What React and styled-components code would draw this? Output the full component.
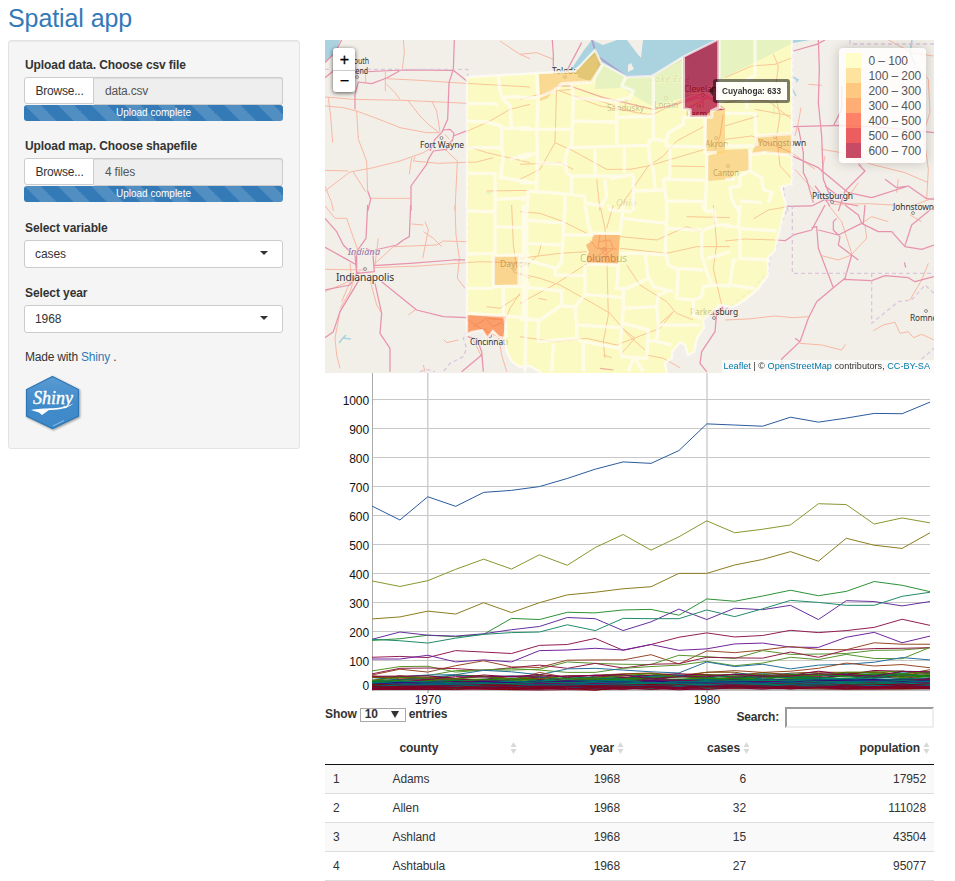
import React from "react";
import styled, { createGlobalStyle } from "styled-components";

const GlobalStyle = createGlobalStyle`
  * { box-sizing: border-box; }
  body { margin: 0; background: #fff; color: #333; font: 12px/17px "Liberation Sans", Arial, sans-serif; letter-spacing: -0.09px; overflow: hidden; }
`;

const Page = styled.div`
  width: 955px;
  height: 881px;
  padding-left: 8px;
  overflow: hidden;
`;
const Title = styled.h2`
  margin: 0;
  height: 40px;
  padding-top: 4px;
  font-size: 25px;
  line-height: 28px;
  font-weight: 400;
  color: #337ab7;
`;
const Columns = styled.div`
  display: grid;
  grid-template-columns: 292px 609px;
  column-gap: 25px;
  align-items: start;
`;
const Sidebar = styled.aside`
  height: 409px;
  padding: 15px 16px;
  background: #f5f5f5;
  border: 1px solid #e3e3e3;
  border-radius: 3px;
  box-shadow: inset 0 1px 1px rgba(0, 0, 0, 0.05);
`;
const Field = styled.div`
  height: ${(p) => p.$h}px;
  padding-top: ${(p) => p.$top || 0}px;
`;
const Label = styled.label`
  display: block;
  height: 21px;
  line-height: 18px;
  font-weight: 700;
`;
const FileRow = styled.div`
  display: flex;
  height: 28px;
  width: 259px;
  margin-left: -1px;
`;
const Browse = styled.button`
  width: 70px;
  height: 27px;
  padding: 0 0 0 1px;
  font: 12px "Liberation Sans", Arial, sans-serif;
  letter-spacing: -0.2px;
  color: #333;
  background: #fff;
  border: 1px solid #ccc;
  border-radius: 3px 0 0 3px;
`;
const FileName = styled.div`
  flex: 1;
  padding-left: 11px;
  line-height: 26px;
  letter-spacing: -0.2px;
  color: #555;
  background: #eee;
  border: 1px solid #ccc;
  border-left-width: 0;
  border-radius: 0 3px 3px 0;
  box-shadow: inset 0 1px 1px rgba(0, 0, 0, 0.075);
`;
const Progress = styled.div`
  width: 259px;
  height: 16px;
  margin-left: -1px;
  border-radius: 3px;
  color: #fff;
  font-size: 10px;
  letter-spacing: 0;
  line-height: 16px;
  text-align: center;
  background: #337ab7 linear-gradient(45deg, rgba(255,255,255,.15) 25%, transparent 25%, transparent 50%, rgba(255,255,255,.15) 50%, rgba(255,255,255,.15) 75%, transparent 75%) 0 0 / 33.3px 33.3px;
`;
const Select = styled.div`
  display: flex;
  align-items: center;
  justify-content: space-between;
  width: 259px;
  height: 28px;
  margin-left: -1px;
  padding: 0 14px 0 10px;
  background: #fff;
  border: 1px solid #ccc;
  border-radius: 3px;
  &::after {
    content: "";
    border: 4px solid transparent;
    border-top-color: #333;
    border-bottom: 0;
    margin-top: -3px;
  }
`;
const Made = styled.p`
  margin: 0;
  height: 25px;
  line-height: 19px;
  letter-spacing: -0.2px;
`;
const Link = styled.a`
  color: ${(p) => p.$c || "#337ab7"};
`;
const Logo = styled.svg`
  display: block;
  width: 60px;
  height: 60px;
  letter-spacing: 0;
`;
const Main = styled.main`
  display: flex;
  flex-direction: column;
`;
const MapBox = styled.div`
  position: relative;
  height: 333px;
  background: #f2efe9;
  overflow: hidden;
`;
const Canvas = styled.svg`
  display: block;
  width: 609px;
  height: ${(p) => p.$h}px;
`;
const Zoom = styled.div`
  position: absolute;
  left: 8px;
  top: 8px;
  width: 22px;
  border-radius: 3px;
  background: #fff;
  box-shadow: 0 1px 4px rgba(0, 0, 0, 0.65);
`;
const ZoomButton = styled.div`
  height: 22px;
  padding-left: 1px;
  text-align: center;
  font: 400 16px/23px "Liberation Sans", sans-serif;
  -webkit-text-stroke: 0.3px #000;
  color: #000;
  & + & { border-top: 1px solid #ccc; line-height: 19px; }
`;
const Legend = styled.div`
  position: absolute;
  right: 8px;
  top: 8px;
  width: 87px;
  height: 115px;
  padding: 5px 7px;
  border-radius: 4px;
  background: rgba(255, 255, 255, 0.8);
  box-shadow: 0 0 12px rgba(0, 0, 0, 0.2);
`;
const LegendRow = styled.div`
  display: flex;
  height: 15px;
  line-height: 16px;
  color: #555;
  white-space: nowrap;
  &::before {
    content: "";
    flex: none;
    width: 15px;
    margin-right: 7.5px;
    opacity: 0.7;
    background: ${(p) => p.$c};
  }
`;
const Tooltip = styled.div`
  position: absolute;
  left: 388px;
  top: 39px;
  width: 77px;
  height: 24px;
  border: 3px solid rgba(0, 0, 0, 0.5);
  border-radius: 3px;
  background: rgba(255, 255, 255, 0.88);
  background-clip: padding-box;
  color: #333;
  font: 700 8.3px/18px "Liberation Sans", sans-serif;
  letter-spacing: 0;
  text-align: center;
  white-space: nowrap;
  &::before {
    content: "";
    position: absolute;
    left: -7px;
    top: 4px;
    border: 5px solid transparent;
    border-right: 4px solid rgba(0, 0, 0, 0.6);
    border-left: 0;
  }
`;
const Attribution = styled.div`
  position: absolute;
  right: 0;
  bottom: 0;
  width: 212px;
  height: 13px;
  padding-right: 4px;
  text-align: right;
  font-size: 9.15px;
  letter-spacing: 0;
  line-height: 13px;
  white-space: nowrap;
  background: rgba(255, 255, 255, 0.7);
`;
const Controls = styled.div`
  display: flex;
  justify-content: space-between;
  height: 25px;
  font-weight: 700;
`;
const Length = styled.div`
  display: flex;
  align-items: center;
  height: 17px;
  gap: 3px;
`;
const LengthSelect = styled.span`
  display: flex;
  justify-content: space-between;
  align-items: center;
  width: 46px;
  height: 14px;
  padding: 0 6px 0 4px;
  border: 1px solid #a9a9a9;
  background: #fff;
  &::after {
    content: "";
    border: 4px solid transparent;
    border-top: 7px solid #333;
    border-bottom: 0;
  }
`;
const Search = styled.div`
  display: flex;
  align-items: center;
  height: 21px;
  margin-top: 1px;
  gap: 6px;
  letter-spacing: -0.2px;
`;
const SearchBox = styled.input`
  width: 149px;
  height: 21px;
  border: 2px solid;
  border-color: #9a9a9a #eee #eee #9a9a9a;
  background: #fff;
  outline: 0;
`;
const Row = styled.div`
  display: grid;
  grid-template-columns: 67.5px 128.5px 99px 126px 180px;
  padding-right: 8px;
  height: 29px;
  line-height: 28px;
  background: ${(p) => (p.$odd ? "#f9f9f9" : "#fff")};
  border-bottom: 1px solid #ddd;
`;
const HeadRow = styled(Row)`
  height: 34px;
  line-height: 34px;
  font-weight: 700;
  border-bottom-color: #111;
`;
const Cell = styled.span`
  text-align: ${(p) => (p.$left ? "left" : "right")};
  padding-left: ${(p) => p.$pad || 0}px;
`;
const HeadCell = styled.span`
  display: flex;
  align-items: center;
  justify-content: ${(p) => (p.$spread ? "space-between" : "flex-end")};
  gap: 3px;
  margin-right: ${(p) => (p.$spread ? 4 : -4)}px;
  padding-left: ${(p) => (p.$spread ? 7 : 0)}px;
`;
const SortIcon = styled.svg`
  width: 7px;
  height: 12px;
  fill: #d9d9d9;
`;

const TILES = { A: [320, 36], B: [520, 36], C: [725, 36], D: [320, 205], E: [520, 205], F: [725, 205] };

const minor = {
  A: "M250 12L253 50L247 98M137 105V140M540 15L600 55L630 68M15 183L100 190L250 193L443 202M15 210L70 215L110 225L190 255L240 275L320 290L360 290M196 108V165M265 195L300 240L325 265L355 288M335 195L350 225L360 288M200 128L300 133L400 140L630 153M200 145L225 170L240 190M25 185L32 240L38 320M15 465L90 408L160 395L240 375L310 350L330 338M110 225L115 310L140 375L143 465M98 405L137 467M275 365L268 415M15 403L85 405M285 362L280 375L355 382L470 378L520 365M375 340L412 375L405 525M375 295L388 310M150 487H270M15 450L35 500L40 525M443 285L510 255L570 220L630 205M440 330L500 350L630 380M500 465L630 463",
  B: "M0 55L50 50L100 70M0 190L100 165L160 160M110 150L105 320L60 400L0 430M105 320L160 345L260 400L330 400L385 390L555 340M230 430L240 525M385 390L330 470L290 525M120 165L240 210L380 235L400 235L490 190M160 180L240 195L350 230M490 210L540 195L570 190M490 175L545 170M555 270L470 315L430 360L385 390M610 235L600 300L585 340M0 385L120 380L160 400M450 390L555 392M535 200L540 243",
  C: "M0 125L80 90L150 85L202 65M0 200L50 190L130 195L200 250M90 220L200 240M145 55L160 90L150 170L165 240L155 300L165 390L202 430M228 215L220 260L210 300M0 310L80 300L200 350L270 400M250 145L290 148M355 335L410 390M490 12L560 50L625 60M575 90L610 130L615 230L595 290L610 400L605 490M290 340L350 350L440 385L540 410L610 440M520 430L515 470M325 505L430 503L560 510L627 485M210 400L290 490M0 270L100 240M400 440L365 490M480 70L540 85M300 360L290 410",
  D: "M15 2L45 40L80 40L115 140M15 193L130 195M15 260L85 230L120 200M160 180L220 125L350 120L370 108L443 110M160 188L300 183L480 170L630 175M120 220L60 320L45 400L50 450L60 490M90 175L95 220L65 290M110 200L90 260L60 310M150 225L170 300L185 325M405 0L408 90L418 160L412 220L435 250M315 50L325 75L308 160M275 57L310 60M310 80L340 100L365 125M370 403L380 413L415 405M575 0L580 120L590 190M500 380L535 395L545 450L560 500M310 480L315 500M175 100L165 180M265 330L285 315M460 405L485 455M580 200L630 220M500 305L540 310L600 270M600 265L570 310L550 360M445 345L480 370L500 375M460 365L500 340L550 345M500 345L520 365L550 350",
  E: "M0 20L60 25L130 50L200 85M240 0L255 70L260 140L265 330L250 410L255 460M260 70L280 0M210 105L230 130L290 132M240 90L235 125L255 150L280 130L270 105L235 110M300 95L410 105L500 65L545 80M0 160L120 145L200 140M0 205L60 220L120 240L210 290L270 325L330 395L375 435M110 235L195 180L260 135M110 235L0 295M0 395L100 410L200 400L290 420L420 370L460 320M320 180L360 240L440 290L470 325L520 345M460 320L410 365M630 125L530 125L440 145L300 130M500 35L630 38M580 0L590 120L580 190L605 300M0 155L20 180L55 150L65 115M380 450L430 460L480 488M55 280L80 285M250 450L275 458M300 365L345 400L300 450",
  F: "M0 108L60 102L150 105M85 42L130 15L190 5M0 345L70 342L150 333L205 338L250 335M225 415L290 420L350 435L362 418M445 377L475 360L510 352L525 385L550 380L565 398L590 388L627 405M310 0L350 50L380 145M420 60L425 100L380 148M410 55L440 35L490 50M290 152L340 165L380 150M610 175L590 225L555 285M555 30L590 50",
};
const major = {
  A: "M15 80L45 50L65 12M15 125L40 105L80 110L250 102L400 103L443 137M115 138L155 143L200 126L238 105M403 12L400 100L387 140L383 250L365 290M115 138L105 175L105 220M365 290L370 282L390 280L402 292L398 312L390 320L380 340L340 345L325 370L320 385L273 450V525M365 290L345 310L330 345M400 300L443 283M143 465L152 490L143 525",
  B: "M97 12L100 55L100 100M185 20L140 105M110 150L150 150L250 185L400 220L470 205L540 175L560 180L615 220M490 200L530 185L560 188L600 185M500 220L560 185M545 170L550 215",
  C: "M205 45L275 25L300 12M280 12L283 100L280 200L290 300L295 430L325 505M205 272L350 268L480 275L627 290M325 270L350 220L350 150M220 275L235 350L235 410L245 430L265 500M190 355L280 395L370 470L440 485L550 450L605 488L627 490M400 385L420 405L360 465L340 525M480 430L515 455L550 450M185 511L260 510L300 490L400 510M270 450L315 510M300 450L340 480",
  D: "M143 0L138 100L110 140V190M138 130L158 140L163 200L110 205L105 150M15 40L50 80L70 120L100 150M15 127L75 160L110 180M272 0L268 95L250 105L230 120L165 135M160 182L270 175L400 165L435 165M185 230L290 315L370 335L443 338M15 255L90 240L115 200M165 235L185 325L180 385L210 430L210 500M120 220L60 320L40 380L15 398M470 400L485 440L490 500M485 450L425 500M443 395L470 403",
  E: "M610 303L590 325L585 380L545 440L540 475L560 500M580 330L610 310M240 490L280 495",
  F: "M155 105L180 107L210 88L260 75L300 0M260 68L275 65L280 130L325 248L360 220L380 150L340 120L345 95L325 75L325 50L335 40M280 75L340 90L410 55L400 30L360 0M410 55L460 80L500 80L540 125L590 133L627 120M540 122L560 60L627 5M420 0L415 55M325 248L275 290L250 340L225 410L170 462V500M355 223L440 227L480 212L550 218L570 230L627 215M538 172L542 188M380 150L400 165M210 400L225 410",
};
const borders = {
  A: "M443 203H518L535 208M535 120L540 165L548 190L570 208L575 278M550 185L580 182L630 185M443 255L500 258L545 270L545 335L550 370L540 430M545 278L630 275M443 335H540M570 370L630 352M443 412H525V525M543 385L545 425L630 438M525 490L625 485V460",
  B: "M50 115L55 190L50 280L52 350L50 465M0 185H50L100 165L125 143L215 138L250 82M155 145L160 190L155 330M160 185L285 195L330 185L340 165L305 150L318 122M290 195V325M155 255L290 258M290 245L400 240M400 122V310L440 315L445 290L490 265V245L510 243M0 280H155M145 335L385 328L390 312L400 310M145 335L135 370L140 410L155 420L315 420L340 415M0 370L50 350M50 380L135 385M225 340V415M313 335V410M385 328L390 375L400 400L405 460M440 315V330L555 333M450 335V425L430 430L440 500V525M430 430L560 433M555 240V350H590M560 350V430L555 525M340 420V525M255 430L260 480L245 510L195 500V480M155 420V475M25 465L150 475L195 480M25 465L20 525M0 440H50M135 480V525M0 490L25 487M270 428L315 420M340 465L440 462M440 495L560 497M490 62V218L510 222V243H575V225L597 215V12",
  C: "M90 12V120L65 130V220M0 232H90L95 330M95 300L200 293M0 330H90M75 355L120 350L200 358M75 340V405L45 420L45 450L15 455L20 490L40 525M75 405L110 425L115 460L140 470L130 500M0 430H30M45 495L110 500",
  D: "M443 18L520 20M525 0V145L443 147M525 65L610 68M520 152V245L597 243L630 240M597 243V152L630 150M525 152L597 150M443 250H520M550 250V330M610 0V340M443 325L560 333L630 340M555 333L560 400",
  E: "M20 0V245L15 500M20 45L135 55M20 115L130 120M0 160L110 190L125 170L135 0M135 90H218L205 60L195 0M105 190V210L195 212M0 245L125 258V300L60 345L0 342M55 345V410L170 400L170 360L165 305L195 268L310 278M125 303L165 305M195 180V268M300 88L310 0M218 85L300 85M200 177L295 180L290 250L320 250L355 235L385 220L375 145H300M310 40L440 55L435 150M375 145L440 150L445 180L475 195L470 280L520 285L520 330L545 340M390 220L400 245L460 260M545 75L440 70M440 0V70M545 75V150L560 200L575 240L550 245L545 275L520 285M475 190L550 195M545 0L560 20L580 15L590 60L550 75M310 250V310L410 305L415 270L440 260M310 310L300 425L305 455L380 460L385 375L310 355M170 360L300 368M410 305L415 360L540 360M415 360L410 410L455 420M385 408H410M170 400L190 410L300 430M190 410V500M100 415L95 500M340 460L325 500M345 460L370 500M590 60H630M560 160L600 150L630 140M575 240L630 243M265 0L270 15L335 20",
  F: "M45 0L40 70L155 78M35 165L25 165L15 240L90 250M45 70V160L135 165M0 240L15 245M0 65H40",
};
const dashed = {
  A: "M15 100H443V525",
  C: "M202 12V445L175 450L180 500L190 525M375 12V24H627",
  D: "M443 0V380L430 400L440 430L430 455L390 475L370 500M300 500L320 493L345 500",
  F: "M190 0L180 20M202 0V205H627M440 205V355L520 290L560 285L600 240L627 265M590 462L627 430M0 315L80 255L130 200L135 150L155 125L160 80L185 15",
};

const specials = [
  ["#fed06c", "M539 74L575 72L587 59L596 51L602 63L592 82L562 84L553 91L548 98L540 101Z"],
  ["#b10026", "M683 57L717 40V36H719V108L725 110L711 111V117H690V110L683 109Z"],
  ["#fed06c", "M707 114L711 111L725 110V153L716 154L706 153Z"],
  ["#fed06c", "M708 156L725 150L748 149L750 170L735 172L731 179L708 181Z"],
  ["#fecb68", "M757 136L792 133V154L768 153L764 151L761 153L752 154Z"],
  ["#fda64c", "M593 234L620 235L618 264L587 263V256L589 252L586 245L592 241Z"],
  ["#fecb68", "M494 256H519V285H494Z"],
  ["#fd7d34", "M467 315L506 316L503 339L499 337L493 331L487 338L482 330L472 332L467 334Z"],
];
const ohio =
  "M467 77L539 73L575 71L595 50L601 63L627 77L652 76L683 57L717 40V30H792V184L781 187L786 205L779 232L775 250L768 258V275L758 289L745 300L733 307L720 305L712 312L703 320L704 328L697 338L694 352L688 355L685 345L680 342L672 352L672 358L665 363L668 380H540V372L530 366L520 367L512 362L507 352L504 338L499 337L493 331L487 338L482 330L472 332L467 334Z";

const Layer = ({ data, ...rest }) =>
  Object.entries(data).map(([k, d]) => (
    <g key={k} transform={`translate(${TILES[k]}) scale(.33333)`}>
      <path d={d} fill="none" vectorEffect="non-scaling-stroke" strokeLinejoin="round" {...rest} />
    </g>
  ));

const places = [
  ["South", 350, 64, 19], ["Bend", 351, 74, 17], ["Fort Wayne", 420, 147.5, 44], ["Toledo", 552, 74, 26],
  ["Sandusky", 607, 111, 37], ["Lorain", 654, 108, 24], ["Cleveland", 684, 92, 38], ["Parma", 686, 117, 26],
  ["Akron", 705, 147, 23], ["Canton", 713, 176, 26], ["Youngstown", 758, 145.5, 48], ["Pittsburgh", 812, 199, 41],
  ["Johnstown", 893, 210, 41], ["Dayton", 500, 267, 29], ["Cincinnati", 470, 344.5, 38], ["Parkersburg", 690, 315, 48],
  ["Romney", 910, 321, 31],
];
const dots = [[357, 77], [441.5, 138], [565, 77], [626, 100], [666, 98], [703, 95], [699, 106], [716, 138], [728, 166], [775, 137], [832, 202], [913, 213], [514, 269], [490, 336], [714, 318], [926, 311], [365, 269], [604, 249]];

function OhioMap() {
  return (
    <Canvas $h={333} viewBox="325 40 609 333">
      <defs>
        <clipPath id="state"><path d={ohio} /></clipPath>
      </defs>
      <path fill="#aad3df" d="M325 40H340L337 52L325 63ZM570 71L584 50L592 40L603 45L617 40H627L636 52L641 58L643 40H810L793 43L760 60L725 77L700 92L683 98L665 103L652 106L638 98L623 88L595 89L598 60L595 55L584 64ZM628 65V72L634 69L631 63Z" fillRule="evenodd" />
      <path d="M793 77L798 80L796 82M792 88L796 96M912 40L910 52L915 65M774 94V115M486 193H491M339 343L343 338L346 335M343 338L351 339" fill="none" stroke="#aad3df" strokeWidth="1.6" />
      <Layer data={minor} stroke="#f8b8a3" strokeWidth="1" />
      <Layer data={major} stroke="#e892ac" strokeWidth="1.25" />
      <Layer data={dashed} stroke="#dac5dd" strokeWidth="1.3" strokeDasharray="4 3" />
      <path d="M592 40L597 56L627 77L652 76L717 40" fill="none" stroke="#aaa2ce" strokeWidth="2" />
      <g fontFamily="Noto Sans, sans-serif" fontSize="9" fill="#333" stroke="#f2efe9" strokeWidth="1.5" paintOrder="stroke" strokeOpacity=".6">
        {places.map(([t, x, y, w]) => <text key={t} x={x} y={y} textLength={w} lengthAdjust="spacingAndGlyphs">{t}</text>)}
        <text x="336" y="281" fontSize="10.5" textLength="58" lengthAdjust="spacingAndGlyphs">Indianapolis</text>
        <text x="580" y="262" fontSize="10.5" textLength="47" lengthAdjust="spacingAndGlyphs">Columbus</text>
        <g fontStyle="italic" fill="#9370a8">
          <text x="348" y="255" textLength="32">Indiana</text>
          <text x="616" y="206" textLength="20">Ohio</text>
          <text x="650" y="82" textLength="40" fill="#7099c0">Lake Erie</text>
        </g>
      </g>
      <g fill="#f2efe9" stroke="#777" strokeWidth=".8">
        {dots.map(([x, y]) => <circle key={x} cx={x} cy={y} r="1.5" />)}
      </g>
      <path fill="#ffffb2" fillOpacity=".7" fillRule="evenodd" d={ohio + specials.slice(0, -1).map((s) => s[1]).join("") + "M467 315L506 316L504 338L499 337L493 331L487 338L482 330L472 332L467 334Z"} />
      {specials.map(([c, d]) => <path key={d} d={d} fill={c} fillOpacity=".7" />)}
      <path fill="#c2ad48" fillOpacity=".4" d="M578 69L596 51L602 63L592 82L578 77Z" />
      <g clipPath="url(#state)" opacity=".3">
        <Layer data={minor} stroke="#ef7d62" strokeWidth="1" />
        <Layer data={major} stroke="#dd4470" strokeWidth="1.2" />
      </g>
      <g opacity=".72">
        <Layer data={borders} stroke="#fffdf6" strokeWidth="3.4" />
        <path d={ohio} fill="none" stroke="#fffdfa" strokeWidth="2.4" />
      </g>
    </Canvas>
  );
}

const YEARS = 21;
const series = [
  ["#2a5b9c", [633,585,665,632,680,687,700,728,760,785,780,824,916,912,908,939,922,936,952,951,991]],
  ["#8b962e", [375,356,376,415,450,416,465,429,490,535,481,527,582,541,553,568,641,638,571,592,575]],
  ["#8b7d1e", [244,251,271,261,300,266,300,327,336,348,355,401,401,430,449,476,443,522,498,487,541]],
  ["#2c9336", [170,176,188,183,191,246,242,267,265,275,277,257,313,305,323,343,324,339,373,360,338]],
  ["#64309c", [174,199,188,185,193,207,218,249,245,204,234,278,242,281,276,291,242,307,304,289,304]],
  ["#218b6a", [174,169,161,178,191,197,199,224,204,246,245,245,275,252,279,308,301,291,291,322,336]],
  ["#921d54", [112,115,111,135,130,125,153,156,177,136,156,181,196,182,187,205,197,204,215,243,222]],
  ["#70249c", [106,106,119,96,103,96,135,137,143,137,156,136,141,158,161,147,146,181,198,162,185]],
  ["#984825", [51,71,61,83,100,79,77,102,103,103,121,89,134,128,137,149,139,138,162,157,157]],
  ["#56942a", [65,80,81,61,68,68,71,96,91,88,87,119,114,108,135,122,123,125,136,137,145]],
  ["#921d48", [55,74,75,73,67,76,85,74,91,75,88,90,112,110,109,130,112,137,142,143,145]],
  ["#56942a", [46,43,49,66,68,73,68,60,60,74,80,85,98,83,92,112,104,122,108,107,146]],
  ["#23719a", [43,45,51,52,67,62,52,72,74,68,62,58,96,80,88,72,85,88,95,111,103]],
  ["#984825", [48,38,40,32,36,30,60,42,50,55,58,50,60,66,60,64,74,92,82,87,76]],
];
const upper = ["#4c7f00", "#7f0055", "#007f32", "#00667f", "#7f4c00", "#007f49", "#7f003f", "#2a7f00"];
const middle = ["#007f5d", "#00667f", "#007f49", "#00537f", "#7f0040", "#007f6f", "#7f0055", "#007f32", "#005c7f", "#33007f"];
const lower = ["#7f0019", "#7f0032", "#007f5d", "#7f0a00", "#00667f", "#7f0026"];
let seed = 17;
const random = () => {
  seed = (seed * 16807) % 2147483647;
  return seed / 2147483647;
};
const addBand = (count, colors, min, spread, growth, wobble) => {
  for (let i = 0; i < count; i += 1) {
    const base = min + random() * spread;
    series.push([
      colors[i % colors.length],
      Array.from({ length: YEARS }, (_, k) => base + (growth * k) / 20 + (random() - 0.5) * wobble),
    ]);
  }
};
addBand(18, upper, 22, 17, 22, 19);
addBand(32, middle, 10, 17, 9, 11);
addBand(20, lower, 2, 12, 3, 9);
const px = (k) => 47 + k * 27.9;
const py = (v) => 316.8 - v * 0.2903;

function Chart() {
  return (
    <Canvas $h={333} viewBox="0 0 609 333">
      {[0,1,2,3,4,5,6,7,8,9,10].map((n) => (
        <React.Fragment key={n}>
          <path d={`M47 ${Math.floor(py(n * 100)) + 0.5}H605`} stroke="#c8c8c8" />
          <text x="44" y={n ? py(n * 100) + 5.3 : 317} textAnchor="end" fontSize="12" fill="#111">{n * 100}</text>
        </React.Fragment>
      ))}
      <path d="M47.5 0V317" stroke="#aaa" />
      <path d="M102.8 0V317M382 0V317" stroke="#c8c8c8" strokeWidth="1.3" />
      <path d="M47 317H605M103 317V320M382 317V320" stroke="#888" />
      {series.map(([c, values], i) => (
        <polyline key={i} points={values.map((v, k) => `${px(k)},${py(v)}`).join(" ")} fill="none" stroke={c} strokeWidth="1" />
      ))}
      <text x="102.8" y="331" textAnchor="middle" fontSize="12" fill="#111">1970</text>
      <text x="381.8" y="331" textAnchor="middle" fontSize="12" fill="#111">1980</text>
    </Canvas>
  );
}

const Sort = () => (
  <SortIcon viewBox="0 0 7 12"><path d="M3.5 0L6.5 5H.5ZM3.5 12L6.5 7H.5Z" /></SortIcon>
);

const Upload = ({ label, file, h }) => (
  <Field $h={h}>
    <Label>{label}</Label>
    <FileRow><Browse>Browse...</Browse><FileName>{file}</FileName></FileRow>
    <Progress>Upload complete</Progress>
  </Field>
);

const legend = [
  ["#ffffb2", "0 – 100"], ["#fed976", "100 – 200"], ["#feb24c", "200 – 300"], ["#fd8d3c", "300 – 400"],
  ["#fc4e2a", "400 – 500"], ["#e31a1c", "500 – 600"], ["#b10026", "600 – 700"],
];
const rows = [["1", "Adams", "1968", "6", "17952"], ["2", "Allen", "1968", "32", "111028"], ["3", "Ashland", "1968", "15", "43504"], ["4", "Ashtabula", "1968", "27", "95077"]];

export default function App() {
  return (
    <Page>
      <GlobalStyle />
      <Title>Spatial app</Title>
      <Columns>
        <Sidebar>
          <Upload label="Upload data. Choose csv file" file="data.csv" h={81} />
          <Upload label="Upload map. Choose shapefile" file="4 files" h={81} />
          <Field $h={66} $top={1}>
            <Label>Select variable</Label>
            <Select>cases</Select>
          </Field>
          <Field $h={64}>
            <Label>Select year</Label>
            <Select>1968</Select>
          </Field>
          <Made>Made with <Link>Shiny</Link> .</Made>
          <Logo viewBox="0 0 60 60">
            <defs>
              <linearGradient id="hex" x2="0" y2="1"><stop stopColor="#5a9bd2" /><stop offset=".5" stopColor="#428bca" /><stop offset="1" stopColor="#3d89ca" /></linearGradient>
              <filter id="soft" x="-20%" y="-20%" width="140%" height="140%"><feDropShadow dx="1" dy="1" stdDeviation="1" floodOpacity=".4" /></filter>
            </defs>
            <path d="M27.5 3.500L53.500 16.500V43L27.500 55.500L1.500 43V16.500Z" fill="url(#hex)" stroke="#2f76b3" strokeWidth="1.2" filter="url(#soft)" />
            <text x="8" y="31" fontFamily="Liberation Serif, serif" fontSize="18" fontStyle="italic" fontWeight="400" fill="#fff" stroke="#fff" strokeWidth=".4" textLength="40" lengthAdjust="spacingAndGlyphs">Shiny</text>
            <path d="M6 37C18 34 38 37.500 49 30C42 36.500 30 37 24 37L17 42L14 39.500Z" fill="#fff" />
            <path d="M28 53L39 47.500" stroke="#a8cce9" strokeWidth=".8" />
          </Logo>
        </Sidebar>
        <Main>
          <MapBox>
            <OhioMap />
            <Zoom><ZoomButton>+</ZoomButton><ZoomButton>−</ZoomButton></Zoom>
            <Legend>{legend.map(([c, t]) => <LegendRow key={t} $c={c}>{t}</LegendRow>)}</Legend>
            <Tooltip>Cuyahoga: 633</Tooltip>
            <Attribution>
              <Link $c="#0078a8">Leaflet</Link> | © <Link $c="#0078a8">OpenStreetMap</Link> contributors, <Link $c="#0078a8">CC-BY-SA</Link>
            </Attribution>
          </MapBox>
          <Chart />
          <Controls>
            <Length>Show <LengthSelect>10</LengthSelect> entries</Length>
            <Search>Search: <SearchBox /></Search>
          </Controls>
          <HeadRow>
            <span />
            <HeadCell $spread>county <Sort /></HeadCell>
            <HeadCell>year <Sort /></HeadCell>
            <HeadCell>cases <Sort /></HeadCell>
            <HeadCell>population <Sort /></HeadCell>
          </HeadRow>
          {rows.map(([id, ...cells], i) => (
            <Row key={id} $odd={i % 2 === 0}>
              <Cell $left $pad={8}>{id}</Cell>
              {cells.map((c, k) => <Cell key={k} $left={k === 0}>{c}</Cell>)}
            </Row>
          ))}
        </Main>
      </Columns>
    </Page>
  );
}
